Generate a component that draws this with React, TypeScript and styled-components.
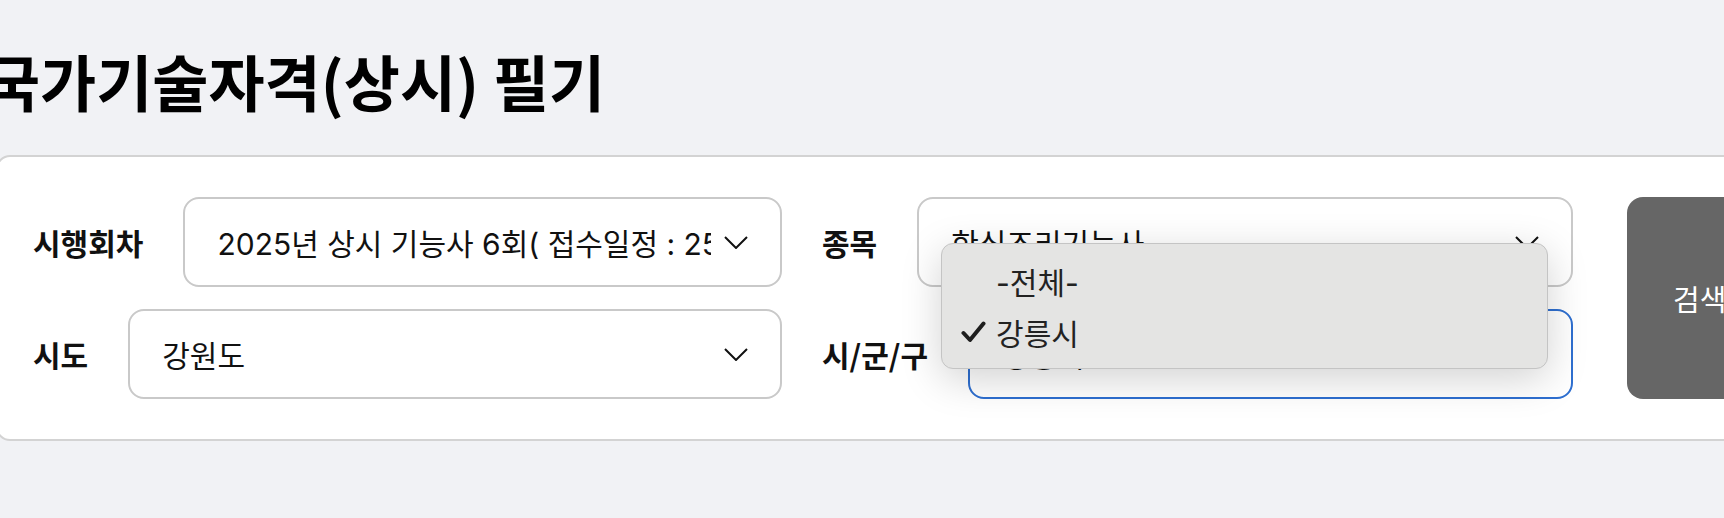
import React from "react";
import styled, { createGlobalStyle } from "styled-components";

const GlobalStyle = createGlobalStyle`
  html, body {
    margin: 0;
    padding: 0;
    overflow: hidden;
    background: #f1f2f5;
  }
  body {
    font-family: Inter, "Noto Sans CJK KR", "Noto Sans", sans-serif;
    color: #111;
  }
`;

const Page = styled.div`
  width: max-content;
  margin-left: -16px;
  padding-top: 50px;
`;

const Title = styled.h1`
  margin: 0 0 44px;
  font-family: "Noto Sans CJK KR", sans-serif;
  font-size: 61px;
  line-height: 61px;
  font-weight: 700;
  color: #000;
`;

const Card = styled.section`
  display: flex;
  align-items: stretch;
  margin-left: 12px;
  padding: 40px 60px 40px 35px;
  background: #fff;
  border: 2px solid #d3d3d3;
  border-radius: 14px;
`;

const FieldGrid = styled.div`
  display: grid;
  grid-template-columns: 749px 751px;
  column-gap: 40px;
  row-gap: 22px;
`;

const Field = styled.div`
  display: flex;
  align-items: center;
  gap: 40px;
`;

const Label = styled.span`
  font-family: "Noto Sans CJK KR", sans-serif;
  font-size: 30px;
  font-weight: 700;
  white-space: nowrap;
  color: #111;
`;

const Select = styled.div<{ $focused?: boolean }>`
  position: relative;
  flex: 1;
  min-width: 0;
  height: 90px;
  box-sizing: border-box;
  display: flex;
  align-items: center;
  gap: 13px;
  padding: 0 32px;
  background: #fff;
  border: 2px solid ${(p) => (p.$focused ? "#2e6fd0" : "#c9c9c9")};
  border-radius: 16px;
`;

const Value = styled.span`
  flex: 1;
  min-width: 0;
  overflow: hidden;
  white-space: nowrap;
  font-size: 30px;
  color: #111;
`;

const Chevron = () => (
  <svg width="24" height="13" viewBox="0 0 24 13" fill="none">
    <polyline points="1,1 12,12 23,1" stroke="#111" strokeWidth="2" />
  </svg>
);

const Menu = styled.ul`
  position: absolute;
  left: -29px;
  top: -68px;
  width: 607px;
  box-sizing: border-box;
  margin: 0;
  padding: 11px 0;
  list-style: none;
  background: #e4e4e3;
  border: 1px solid #c4c4c4;
  border-radius: 12px;
  box-shadow: 0 10px 40px rgba(0, 0, 0, 0.18);
  z-index: 10;
`;

const MenuItem = styled.li`
  height: 51px;
  display: flex;
  align-items: center;
  padding-left: 19px;
  font-size: 30px;
  color: #222;
`;

const CheckSlot = styled.span`
  width: 35px;
  display: flex;
  align-items: center;
`;

const Check = () => (
  <svg width="25" height="22" viewBox="0 0 25 22" fill="none">
    <path d="M2.5 12 L9 19 L22.5 2.5" stroke="#1e1e1e" strokeWidth="4" strokeLinecap="round" strokeLinejoin="round" />
  </svg>
);

const SearchButton = styled.button`
  margin-left: 54px;
  width: 144px;
  padding: 0 0 0 46px;
  border: 0;
  border-radius: 16px;
  background: #666;
  color: #fff;
  font-family: "Noto Sans CJK KR", sans-serif;
  font-size: 29px;
  text-align: left;
  white-space: nowrap;
`;

const regions = ["-전체-", "강릉시"];

export default function App() {
  return (
    <>
      <GlobalStyle />
      <Page>
        <Title>국가기술자격(상시) 필기</Title>
        <Card>
          <FieldGrid>
            <Field>
              <Label>시행회차</Label>
              <Select>
                <Value>2025년 상시 기능사 6회( 접수일정 : 25.10.20 ~ 25.10.23 )</Value>
                <Chevron />
              </Select>
            </Field>
            <Field>
              <Label>종목</Label>
              <Select>
                <Value>한식조리기능사</Value>
                <Chevron />
              </Select>
            </Field>
            <Field>
              <Label>시도</Label>
              <Select>
                <Value>강원도</Value>
                <Chevron />
              </Select>
            </Field>
            <Field>
              <Label>시/군/구</Label>
              <Select $focused>
                <Value>강릉시</Value>
                <Chevron />
                <Menu>
                  {regions.map((r) => (
                    <MenuItem key={r}>
                      <CheckSlot>{r === "강릉시" && <Check />}</CheckSlot>
                      {r}
                    </MenuItem>
                  ))}
                </Menu>
              </Select>
            </Field>
          </FieldGrid>
          <SearchButton>검색</SearchButton>
        </Card>
      </Page>
    </>
  );
}
